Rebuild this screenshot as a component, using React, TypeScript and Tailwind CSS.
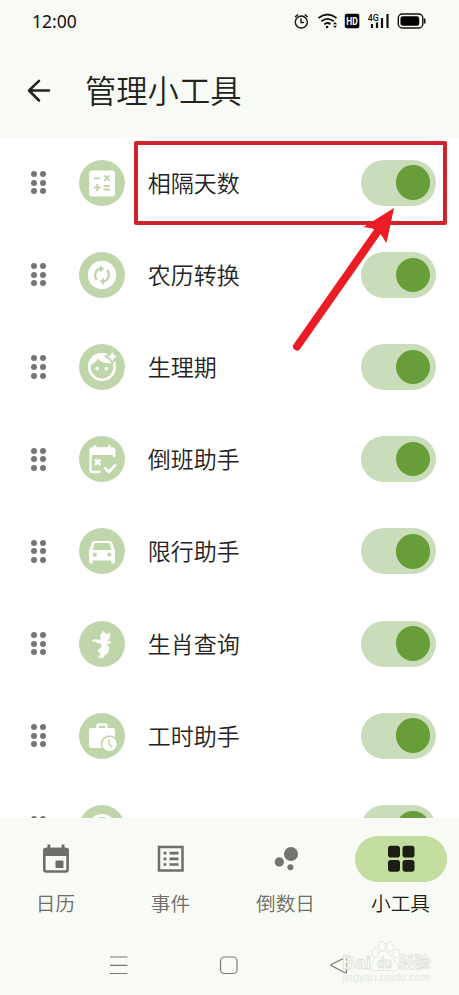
import type { ReactNode } from "react";

const green = "#bfd6aa";

function Face() {
  return (
    <>
      <clipPath id="head">
        <circle cx="23" cy="23" r="14" />
      </clipPath>
      <circle cx="23" cy="23" r="12.700" fill="none" stroke="#fff" strokeWidth="2.600" />
      <path clipPath="url(#head)" d="M8 22.500C13 21 17 18 18.800 14.800C22 18.500 27 20 37 19.200V8H8Z" fill="#fff" />
      <circle cx="18.200" cy="24.600" r="1.900" fill="#fff" />
      <circle cx="27.300" cy="24.600" r="1.900" fill="#fff" />
      <path d="M33.300 4L36.500 9.400L42 12.600L36.500 15.800L33.300 20.500L30.100 15.800L25 12.600L30.100 9.400Z" fill={green} />
      <path d="M33.300 8L34.900 11L38 12.600L34.900 14.200L33.300 17.200L31.700 14.200L28.600 12.600L31.700 11Z" fill="#fff" />
    </>
  );
}

const icons: Record<string, ReactNode> = {
  calc: (
    <>
      <rect x="10.200" y="10.500" width="25.800" height="26" rx="3" fill="#fff" />
      <path d="M15 18.200h6M25.300 15.500l5.200 5.200M30.500 15.500l-5.200 5.200M14.700 27.600h7M18.200 24.100v7M24.500 26h6.500M24.500 29.500h6.500" stroke={green} strokeWidth="2" />
    </>
  ),
  convert: (
    <>
      <circle cx="23" cy="23" r="14.200" fill="#fff" />
      <path d="M18 28A7 7 0 0 1 21 16.600M28 18A7 7 0 0 1 25 29.400" fill="none" stroke={green} strokeWidth="2.300" />
      <path d="M21 13L25.200 16.700L21 20.400ZM25 33L20.800 29.300L25 25.600Z" fill={green} />
    </>
  ),
  face: <Face />,
  shift: (
    <>
      <path d="M35.200 20V14.500Q35.200 12.500 33 12.500H13.500Q11.500 12.500 11.500 14.500V33.500Q11.500 36 13.500 36H20.500" fill="none" stroke="#fff" strokeWidth="2.400" strokeLinecap="round" />
      <path d="M11 12.500H35.500V19H11ZM14.500 9.300h2.800v4h-2.800zM29 9.300h2.800v4H29z" fill="#fff" />
      <path d="M16 23.500l5.400 5.400M21.400 23.500L16 28.900" stroke="#fff" strokeWidth="2.500" />
      <path d="M26.300 32.300l3.500 3.700L36 29.500" fill="none" stroke="#fff" strokeWidth="2.600" strokeLinecap="round" strokeLinejoin="round" />
    </>
  ),
  car: (
    <>
      <path fillRule="evenodd" d="M15.400 12.900H30.600Q32.600 12.900 33.200 14.700L36 22.700V34Q36 35.500 34.500 35.500H33.500Q32.200 35.500 32.200 34V32.400H13.800V34Q13.800 35.500 12.500 35.500H11.500Q10 35.500 10 34V22.700L12.800 14.700Q13.400 12.900 15.400 12.900ZM15.700 15.100L13.500 21.900H32.500L30.300 15.100Z" fill="#fff" />
      <circle cx="15.800" cy="26.700" r="2.100" fill={green} />
      <circle cx="30.300" cy="26.700" r="2.100" fill={green} />
    </>
  ),
  zodiac: (
    <path d="M21.800 13.500L23.200 12.500L24.300 10L26.300 12.800L28.500 13.300L31.300 12.200L30.600 15L30.800 17L29.300 18.500L28 20.500L31.500 20.300L31.800 22L28.300 22.800L27.300 24L29.800 25.500L29.700 30L27.500 33.300L25.500 34L24.800 36.300L19.500 36.800L19.300 35.500L21.300 34.500L21.500 31.500L18.800 30.800L20 28L23 26L22 22.500L18.200 22L16.500 20.300L13.700 20.500V19L17 18.500L20.300 19.300L22.300 18L21.500 15.500Z" fill="#fff" stroke="#fff" strokeWidth=".5" strokeLinejoin="round" />
  ),
  work: (
    <>
      <rect x="10" y="15" width="26" height="20" rx="2" fill="#fff" />
      <path d="M18.500 15.500V12.500Q18.500 11.500 19.500 11.500H26.500Q27.500 11.500 27.500 12.500V15.500" fill="none" stroke="#fff" strokeWidth="2.400" />
      <circle cx="30.500" cy="31" r="8.700" fill={green} />
      <circle cx="30.500" cy="31" r="7.100" fill="#fff" />
      <path d="M30.100 26.800V31.300L33.100 34.200" fill="none" stroke={green} strokeWidth="1.500" />
    </>
  ),
  more: <circle cx="23" cy="23" r="12.500" fill="none" stroke="#fff" strokeWidth="3" />,
};

const rows = [
  ["calc", "相隔天数"],
  ["convert", "农历转换"],
  ["face", "生理期"],
  ["shift", "倒班助手"],
  ["car", "限行助手"],
  ["zodiac", "生肖查询"],
  ["work", "工时助手"],
  ["more", ""],
];

function Grip() {
  return (
    <div className="ml-[31px] grid grid-cols-2 gap-x-[2.700px] gap-y-[2.600px]">
      {[0, 1, 2, 3, 4, 5].map((i) => (
        <span key={i} className="size-[6px] rounded-full bg-[#747474]" />
      ))}
    </div>
  );
}

function Row({ icon, label }: { icon: string; label: string }) {
  return (
    <div className="flex h-[92.200px] shrink-0 items-center">
      <Grip />
      <svg viewBox="0 0 46 46" className="ml-[33px] size-[46px] shrink-0">
        <circle cx="23" cy="23" r="23" fill={green} />
        {icons[icon]}
      </svg>
      <span className="ml-[23px] flex-1 pb-[2px] text-[23px] font-[350] leading-8 text-[#222]">{label}</span>
      <span className="mr-[23px] flex h-[46px] w-[75px] items-center justify-end rounded-full bg-[#c9ddba] pr-[5.700px]">
        <span className="size-[34.500px] rounded-full bg-[#689e3a]" />
      </span>
    </div>
  );
}

function StatusBar() {
  return (
    <div className="flex h-[43px] shrink-0 items-center justify-between pl-[32px] text-black">
      <span className="pb-[2px] font-['Noto_Sans',sans-serif] text-[17.500px] leading-6 text-[#111]">12:00</span>
      <svg viewBox="290 0 140 43" className="mr-[29px] h-[43px] w-[140px]" fill="none" stroke="#111">
        <circle cx="301.300" cy="22" r="6" strokeWidth="1.400" />
        <path d="M301 18.500V22.500H304M295 17l3-2.500M304.700 14.500l3 2.500" strokeWidth="1.400" />
        <path d="M318.500 18Q327.500 11 336.500 18M321.300 21.300Q327.500 16.500 333.700 21.300M324.200 24.400Q327.500 21.800 330.500 24.200" strokeWidth="1.800" />
        <circle cx="327" cy="27" r="1.300" fill="#111" stroke="none" />
        <path d="M333 24.200l2-2.200 2 2.200zM333 25.700l2 2.200 2-2.200z" fill="#111" stroke="none" />
        <rect x="344.800" y="13.800" width="14.500" height="14.500" rx="2" fill="#000" stroke="none" />
        <text x="352" y="24.700" textAnchor="middle" textLength="11.500" lengthAdjust="spacingAndGlyphs" className="font-['Roboto',sans-serif] text-[10px] font-bold" fill="#fff" stroke="none">HD</text>
        <text x="367.700" y="20.500" textLength="11" lengthAdjust="spacingAndGlyphs" className="font-['Roboto',sans-serif] text-[9px] font-medium" fill="#111" stroke="none">4G</text>
        <path d="M372 24v4M377 22.500V28M382 18v10M387.500 14v14" strokeWidth="2.200" />
        <rect x="398.300" y="14" width="24.500" height="14" rx="4" strokeWidth="1.400" />
        <rect x="400.500" y="16.200" width="18.700" height="9.600" rx="2.500" fill="#000" stroke="none" />
        <path d="M424.700 18.500v5" strokeWidth="1.600" />
      </svg>
    </div>
  );
}

function TabIcon({ name }: { name: string }) {
  if (name === "日历")
    return (
      <svg viewBox="0 0 30 30" className="size-[30px]">
        <rect x="3.300" y="5" width="23.300" height="22.500" rx="2" fill="none" stroke="#6d6e69" strokeWidth="2.600" />
        <path d="M2.100 7Q2.100 3.700 5 3.700H25Q27.900 3.700 27.900 7V12H2.100ZM6.500 .5h2.800v5H6.500zM20.700 .5h2.800v5h-2.800z" fill="#6d6e69" />
        <rect x="14.500" y="16.500" width="8" height="7.500" rx="1" fill="#6d6e69" />
      </svg>
    );
  if (name === "事件")
    return (
      <svg viewBox="0 0 30 30" className="size-[30px]" fill="none" stroke="#6d6e69">
        <rect x="3" y="3" width="23.500" height="23.500" strokeWidth="2.500" />
        <path d="M7.500 9.100h3M7.500 14.800h3M7.500 20.500h3M13.500 9.100h9M13.500 14.800h9M13.500 20.500h9" strokeWidth="2.700" />
      </svg>
    );
  if (name === "倒数日")
    return (
      <svg viewBox="0 0 30 30" className="size-[30px]" fill="#747572">
        <circle cx="20" cy="10" r="7" />
        <circle cx="8.300" cy="18" r="4.700" />
        <circle cx="19.400" cy="23.300" r="3" />
      </svg>
    );
  return (
    <svg viewBox="0 0 30 30" className="size-[30px]" fill="#1b1e13">
      <rect x="2" y="1.700" width="12" height="11.800" rx="2.800" />
      <rect x="16.500" y="1.700" width="12" height="11.800" rx="2.800" />
      <rect x="2" y="16" width="12" height="11.800" rx="2.800" />
      <rect x="16.500" y="16" width="12" height="11.800" rx="2.800" />
    </svg>
  );
}

function TabBar() {
  return (
    <div className="-ml-[2px] flex h-[117px] w-[461px] shrink-0 pt-[17.500px]">
      {["日历", "事件", "倒数日", "小工具"].map((name) => (
        <div key={name} className="flex w-[115px] shrink-0 flex-col items-center">
          <span className={name === "小工具" ? "flex h-[46.500px] w-[92px] items-center justify-center rounded-full bg-[#c2dd9e]" : "flex h-[46.500px] w-[92px] items-center justify-center"}>
            <TabIcon name={name} />
          </span>
          <span className={name === "小工具" ? "mt-[7px] text-[19.700px] font-[350] leading-7 text-[#1b1e18]" : "mt-[7px] text-[19.700px] font-[350] leading-7 text-[#6d6e69]"}>{name}</span>
        </div>
      ))}
    </div>
  );
}

function SystemBar() {
  return (
    <svg viewBox="0 935 459 60" className="h-[60px] w-full shrink-0" fill="none">
      <path d="M110 957h17.500M110 965.300h17.500M110 973.500h17.500" stroke="#777973" strokeWidth="1.200" />
      <rect x="220.500" y="957" width="16.500" height="16.500" rx="4" stroke="#777973" strokeWidth="1.200" />
      <path d="M345.500 957.500L331.500 964.200Q330.300 965 331.500 965.800L345.500 973Q346.500 973.300 346.500 972V958.500Q346.500 957.200 345.500 957.500Z" stroke="#777973" strokeWidth="1.200" />
      <g fill="#fbfcf9" stroke="#dcdfd8" strokeWidth=".8">
        <path d="M383.500 951C378 951 374.500 960 371.500 963.500C368 969 372 972 377 970.500H391C398 972 400 967 396.500 963C392 958 389.500 951 383.500 951Z" />
        <ellipse cx="375.500" cy="953" rx="3" ry="4.300" />
        <ellipse cx="382" cy="946" rx="3.300" ry="4.500" />
        <ellipse cx="390" cy="946.500" rx="3.300" ry="4.500" />
        <ellipse cx="396.500" cy="953.500" rx="3.400" ry="4.300" />
        <text x="342" y="969" textLength="29" lengthAdjust="spacingAndGlyphs" className="font-['Liberation_Sans',sans-serif] text-[19px] font-bold">Bai</text>
        <text x="377" y="968" textLength="15" lengthAdjust="spacingAndGlyphs" className="font-['Liberation_Sans',sans-serif] text-[14px] font-bold">du</text>
        <text x="399" y="968" textLength="31" className="text-[15.500px] font-bold" strokeWidth=".7">经验</text>
      </g>
      <text x="342" y="981" textLength="88" lengthAdjust="spacingAndGlyphs" className="font-['Liberation_Sans',sans-serif] text-[11px]" fill="#e5e8e1">jingyan.baidu.com</text>
    </svg>
  );
}

export default function App() {
  return (
    <div className="relative flex h-[995px] w-[459px] flex-col overflow-hidden bg-[#f8faf5] font-['Noto_Sans_CJK_SC',sans-serif]">
      <StatusBar />
      <header className="flex h-[93.500px] shrink-0 items-center pl-[27px] pt-[1px]">
        <svg viewBox="0 0 24 24" className="mt-px size-[24px]" fill="none" stroke="#22241e" strokeWidth="2.500" strokeLinecap="round" strokeLinejoin="round">
          <path d="M22 11.500H2M12 1.800L2 11.500L12 21.500" />
        </svg>
        <h1 className="ml-[34px] text-[31.300px] font-[350] leading-[46px] text-[#22241e]">管理小工具</h1>
      </header>
      <main className="flex min-h-0 flex-1 flex-col overflow-hidden bg-white">
        {rows.map(([icon, label]) => (
          <Row key={icon} icon={icon} label={label} />
        ))}
      </main>
      <TabBar />
      <SystemBar />
      <div className="absolute left-[134px] top-[141px] h-[84px] w-[313px] rounded-[2px] border-4 border-[#cf242b]" />
      <svg viewBox="0 0 459 995" className="pointer-events-none absolute inset-0 h-[995px] w-[459px]">
        <path d="M297 346.500L380 228" stroke="#eb1c24" strokeWidth="8" strokeLinecap="round" />
        <path d="M394 208L386.500 243L380.500 234L372.500 228.500L363.500 227Z" fill="#eb1c24" />
      </svg>
    </div>
  );
}
